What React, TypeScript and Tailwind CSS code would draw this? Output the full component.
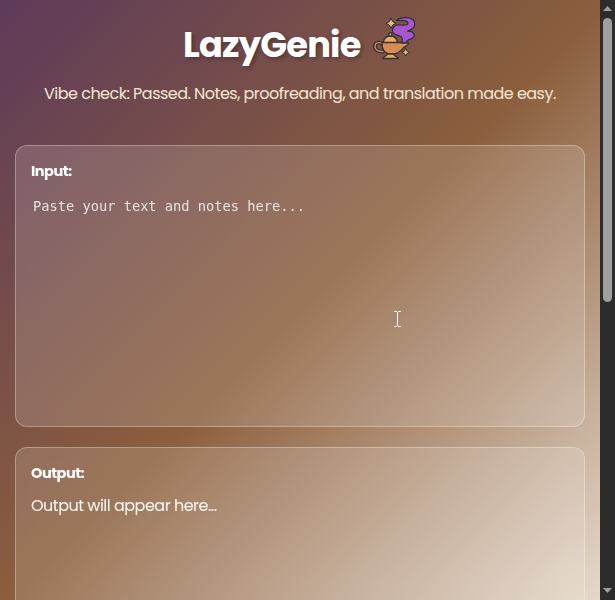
import React from 'react';

interface PanelProps {
  title: string;
  className: string;
  children: React.ReactNode;
}

const LampIcon: React.FC = () => (
  <svg
    viewBox="0 0 44 44"
    className="h-11 w-11 shrink-0 overflow-visible"
    fill="none"
    stroke="#29323c"
    strokeWidth={1.3}
    strokeLinecap="round"
    strokeLinejoin="round"
  >
    {/* smoke */}
    <path
      d="M23.500 4.500C25.500 2.500 29 1.600 32.500 1.600c6 0 9.300 2.500 9.300 6.400 0 3.800-3 5.700-7.300 7.200 4.500.2 6.700 1.500 6.700 4.200 0 3-2.700 3.200-5.200 4.200-1.500.6-2.700 1.700-3.300 3.200l-4.300-.5c1.700-2.300 1.200-5.600-1.400-6.300-3-.8-7.500-1-7.500-5.200 0-4 2.800-5.900 6.500-5.900 2.700 0 9 1 9-1.600 0-2.700-5.500-3.300-11.500-2.800Z"
      fill="#a855d0"
      strokeWidth={1.200}
    />
    {/* handle */}
    <path d="M10 28c-4-2.500-8-1.500-8 2.500 0 3.500 3.500 5.200 8 5" strokeWidth={3.800} />
    <path d="M10 28c-4-2.500-8-1.500-8 2.500 0 3.500 3.500 5.200 8 5" stroke="#d58a52" strokeWidth={1.400} />
    {/* body */}
    <path d="M9 26.500h17c3 .500 6 .800 9.700.500-.500 3-3.700 3-5.700 5.300-2.500 3.200-5.500 5.900-11.500 5.900-7 0-10-4.700-9.500-11.700Z" fill="#d98b53" />
    <path d="M10.300 26.300c.700-4 3.500-6.300 7-6.300s6.500 2.300 7.200 6.300Z" fill="#e9ac60" />
    <circle cx={17.400} cy={18.500} r={1.600} fill="#e9ac60" />
    <path d="M14.500 38h6l1 1.500 3.700 2.200v.800H9.800v-.800l3.700-2.200Z" fill="#e9ac60" />
    {/* sparkles */}
    <path d="m18 2.300 1.700 3.300 3.300 1.700-3.300 1.700-1.700 3.300-1.700-3.300-3.300-1.700 3.300-1.700Z" fill="#e9b878" strokeWidth={1} />
    <path d="m32.700 32.500 1.300 2.500 2.500 1.300-2.500 1.300-1.300 2.500-1.300-2.500-2.500-1.300 2.500-1.300Z" fill="#e9b878" strokeWidth={1} />
  </svg>
);

const Header: React.FC = () => (
  <header className="h-[145px] shrink-0 pt-4">
    <div className="flex h-11 items-center pl-[183px]">
      <h1 className="w-[190px] whitespace-nowrap pt-3.5 text-[35.2px] leading-[44px] font-bold tracking-[-0.78px] text-white [text-shadow:2px_2px_4px_rgba(0,0,0,0.3)]">
        LazyGenie
      </h1>
      <LampIcon />
    </div>
    <p className="mt-[22px] whitespace-nowrap pl-11 text-base leading-6 tracking-[-0.515px] text-[#f5e6d3]">
      Vibe check: Passed. Notes, proofreading, and translation made easy.
    </p>
  </header>
);

const Panel: React.FC<PanelProps> = ({ title, className, children }) => (
  <section className={`mx-[15px] shrink-0 rounded-xl border border-white/30 bg-white/15 px-[15px] pt-[15px] backdrop-blur-[10px] ${className}`}>
    <h2 className="text-[14.5px] leading-5 font-bold tracking-[-0.5px] text-white">{title}</h2>
    {children}
  </section>
);

const TextCursor: React.FC = () => (
  <svg viewBox="0 0 7 16" className="absolute top-[165px] left-[378px] h-4 w-[7px]" fill="#fff" shapeRendering="crispEdges">
    <path d="M0 0h3v1h1V0h3v1H4v14h3v1H4v-1H3v1H0v-1h3V1H0Z" />
  </svg>
);

const Scrollbar: React.FC = () => (
  <aside className="flex h-full w-[15px] shrink-0 flex-col items-center bg-[#2c2c2c]">
    <svg viewBox="0 0 9 5" className="mt-1.5 h-[5px] w-[9px]" fill="#9f9f9f">
      <path d="M4.500 0 9 5H0Z" />
    </svg>
    <div className="mt-[7px] h-[284px] w-[9px] rounded-full bg-[#9f9f9f]" />
    <svg viewBox="0 0 9 5" className="mt-auto mb-[7px] h-[5px] w-[9px]" fill="#9f9f9f">
      <path d="M0 0h9L4.500 5Z" />
    </svg>
  </aside>
);

const App: React.FC = () => {
  return (
    <div className="flex h-[600px] w-[615px] overflow-hidden bg-[linear-gradient(135deg,#5d3a5a_0%,#8b5e3c_50%,#e8dccf_100%)] font-['Poppins',sans-serif]">
      <main className="flex h-full w-[600px] flex-col overflow-hidden">
        <Header />
        <Panel title="Input:" className="relative h-[282px]">
          <textarea
            placeholder="Paste your text and notes here..."
            className="mt-[15px] ml-[2px] block h-[215px] w-[534px] resize-none bg-transparent font-['DejaVu_Sans_Mono',monospace] text-[13.7px] leading-5 text-white outline-none placeholder:text-white/80"
          />
          <TextCursor />
        </Panel>
        <Panel title="Output:" className="mt-5 h-[282px]">
          <p className="mt-[11px] text-base leading-6 tracking-[-0.5px] text-[#fcf8f5]">Output will appear here...</p>
        </Panel>
      </main>
      <Scrollbar />
    </div>
  );
};

export default App;
